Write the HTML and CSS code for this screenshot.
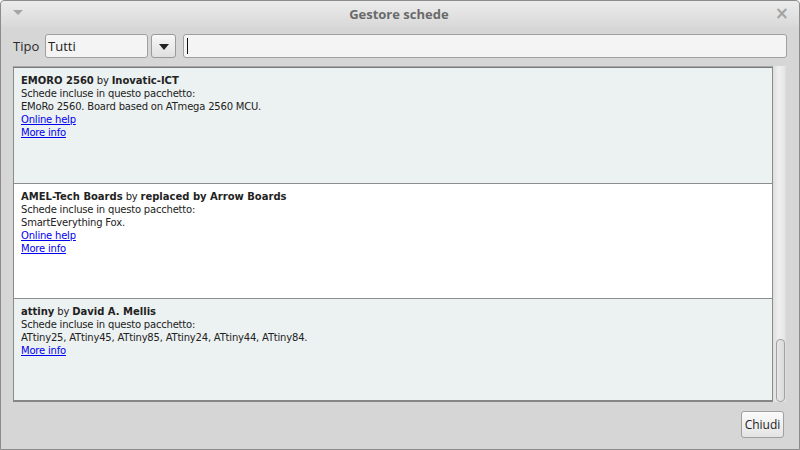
FILE: index.html
```html
<!DOCTYPE html>
<html>
<head>
<meta charset="utf-8">
<link rel="stylesheet" href="styles.css">
</head>
<body>
<div class="window">
  <div class="titlebar">
    <span class="menu-tri"></span>
    <span class="title">Gestore schede</span>
    <span class="close">×</span>
  </div>
  <div class="toolbar">
    <span class="label">Tipo</span>
    <div class="combo">
      <div class="combo-field">Tutti</div>
      <div class="combo-btn"><span class="tri"></span></div>
    </div>
    <div class="search"><span class="caret"></span></div>
  </div>
  <div class="listwrap">
    <div class="list">
      <div class="item alt h1">
        <div><b>EMORO 2560</b> by <b>Inovatic-ICT</b></div>
        <div>Schede incluse in questo pacchetto:</div>
        <div>EMoRo 2560. Board based on ATmega 2560 MCU.</div>
        <div><a href="#">Online help</a></div>
        <div><a href="#">More info</a></div>
      </div>
      <div class="item h2">
        <div><b>AMEL-Tech Boards</b> by <b>replaced by Arrow Boards</b></div>
        <div>Schede incluse in questo pacchetto:</div>
        <div>SmartEverything Fox.</div>
        <div><a href="#">Online help</a></div>
        <div><a href="#">More info</a></div>
      </div>
      <div class="item alt h3">
        <div><b>attiny</b> by <b>David A. Mellis</b></div>
        <div>Schede incluse in questo pacchetto:</div>
        <div>ATtiny25, ATtiny45, ATtiny85, ATtiny24, ATtiny44, ATtiny84.</div>
        <div><a href="#">More info</a></div>
      </div>
    </div>
    <div class="scrollbar"><div class="thumb"></div></div>
  </div>
  <div class="footer">
    <button class="btn">Chiudi</button>
  </div>
</div>
</body>
</html>
```
FILE: styles.css
```css
html, body {
  margin: 0;
  padding: 0;
}
body {
  width: 800px;
  height: 450px;
  overflow: hidden;
  font-family: "Open Sans", "Noto Sans", sans-serif;
}
.window {
  box-sizing: border-box;
  width: 800px;
  height: 450px;
  border: 1px solid #8c8c8c;
  border-radius: 4px 4px 0 0;
  background: #d6d6d6;
  display: flex;
  flex-direction: column;
}
.titlebar {
  height: 27px;
  flex: none;
  display: flex;
  align-items: center;
  justify-content: space-between;
  padding: 0 12px 0 12px;
  background: linear-gradient(#ececec, #d8d8d8);
  border-radius: 4px 4px 0 0;
}
.menu-tri {
  width: 0;
  height: 0;
  border-left: 5px solid transparent;
  border-right: 5px solid transparent;
  border-top: 5px solid #a5a5a5;
  margin-top: -4px;
}
.title {
  font-weight: bold;
  font-size: 13px;
  color: #6a6a6a;
  margin-top: -1px;
}
.close {
  font-family: "DejaVu Sans", sans-serif;
  font-size: 17px;
  font-weight: bold;
  color: #a4a4a4;
  margin-top: -3px;
  margin-right: -2px;
}
.toolbar {
  display: flex;
  align-items: center;
  height: 24px;
  margin: 6px 12px 0 12px;
}
.label {
  font-size: 13px;
  color: #2a2a2a;
  width: 32px;
}
.combo {
  display: flex;
  gap: 3px;
  height: 24px;
}
.combo-field {
  box-sizing: border-box;
  width: 103px;
  height: 24px;
  border: 1px solid #a0a0a0;
  border-radius: 3px;
  background: #f4f4f4;
  font-size: 13px;
  color: #222;
  line-height: 22px;
  padding-left: 2px;
}
.combo-btn {
  box-sizing: border-box;
  width: 25px;
  height: 24px;
  border: 1px solid #9a9a9a;
  border-radius: 3px;
  background: linear-gradient(#f8f8f8, #e0e0e0);
  display: flex;
  align-items: center;
  justify-content: center;
}
.tri {
  width: 0;
  height: 0;
  border-left: 5px solid transparent;
  border-right: 5px solid transparent;
  border-top: 6px solid #222;
  margin-top: 1px;
}
.search {
  box-sizing: border-box;
  flex: 1;
  margin-left: 7px;
  height: 24px;
  border: 1px solid #a0a0a0;
  border-radius: 3px;
  background: #f4f4f4;
  display: flex;
  align-items: center;
  padding-left: 3px;
}
.caret {
  width: 1px;
  height: 16px;
  background: #111;
}
.listwrap {
  display: flex;
  margin: 8px 12px 0 12px;
  height: 336px;
}
.list {
  flex: 1;
  box-sizing: border-box;
  border-top: 1px solid #a8a8a8;
  border-left: 1px solid #8a8a8a;
  border-right: 1px solid #8a8a8a;
  border-bottom: 2px solid #868686;
  box-shadow: inset 0 1px 0 #7a7a7a;
  padding-top: 1px;
  overflow: hidden;
  background: #ecf1f1;
}
.item {
  box-sizing: border-box;
  padding: 6px 7px 0 7px;
  font-family: "DejaVu Sans", sans-serif;
  font-size: 10px;
  line-height: 13px;
  letter-spacing: -0.2px;
  color: #222;
  background: #fff;
  border-bottom: 1px solid #8e8e8e;
}
.item b {
  font-weight: bold;
  letter-spacing: 0;
}
.item a {
  color: #0000ee;
  text-decoration: underline;
}
.alt {
  background: #ecf1f1;
}
.h1 { height: 116px; }
.h2 { height: 115px; }
.h3 { height: 110px; border-bottom: none; }
.scrollbar {
  width: 14px;
  flex: none;
  background: linear-gradient(90deg, #dedede, #efefef 40%, #e6e6e6 80%, #d4d4d4);
  position: relative;
}
.thumb {
  position: absolute;
  left: 3px;
  width: 9px;
  bottom: 0;
  height: 63px;
  box-sizing: border-box;
  border: 1px solid #a2a2a2;
  border-radius: 4px;
  background: linear-gradient(90deg, #e8e8e8, #dadada);
}
.footer {
  display: flex;
  justify-content: flex-end;
  padding: 9px 15px 0 0;
}
.btn {
  box-sizing: border-box;
  width: 43px;
  height: 27px;
  border: 1px solid #a0a0a0;
  border-radius: 3px;
  background: linear-gradient(#fbfbfb, #e4e4e4);
  font-family: "Open Sans", "Noto Sans", sans-serif;
  font-size: 12px;
  color: #222;
  padding: 0;
}
```
